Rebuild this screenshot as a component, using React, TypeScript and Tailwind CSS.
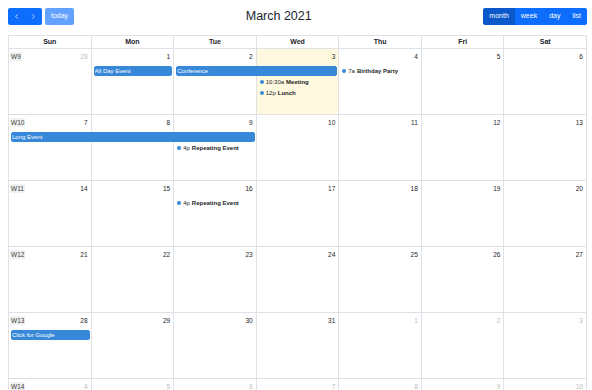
import React from 'react';
import { ChevronLeft, ChevronRight } from 'lucide-react';

type Bar = { col: number; span: number; row: number; title: string };
type Dot = { col: number; row: number; time: string; title: string };
type Week = { label: string; days: { n: number; other?: boolean; today?: boolean }[]; bars?: Bar[]; dots?: Dot[] };

const colStart = ['', 'col-start-1', 'col-start-2', 'col-start-3', 'col-start-4', 'col-start-5', 'col-start-6', 'col-start-7'];
const colSpan = ['', 'col-span-1', 'col-span-2', 'col-span-3'];
const rowStart = ['', 'row-start-1', 'row-start-2', 'row-start-3', 'row-start-4'];

const weeks: Week[] = [
  {
    label: 'W9',
    days: [{ n: 28, other: true }, { n: 1 }, { n: 2 }, { n: 3, today: true }, { n: 4 }, { n: 5 }, { n: 6 }],
    bars: [
      { col: 2, span: 1, row: 2, title: 'All Day Event' },
      { col: 3, span: 2, row: 2, title: 'Conference' },
    ],
    dots: [
      { col: 4, row: 3, time: '10:30a', title: 'Meeting' },
      { col: 4, row: 4, time: '12p', title: 'Lunch' },
      { col: 5, row: 2, time: '7a', title: 'Birthday Party' },
    ],
  },
  {
    label: 'W10',
    days: [7, 8, 9, 10, 11, 12, 13].map((n) => ({ n })),
    bars: [{ col: 1, span: 3, row: 2, title: 'Long Event' }],
    dots: [{ col: 3, row: 3, time: '4p', title: 'Repeating Event' }],
  },
  {
    label: 'W11',
    days: [14, 15, 16, 17, 18, 19, 20].map((n) => ({ n })),
    dots: [{ col: 3, row: 2, time: '4p', title: 'Repeating Event' }],
  },
  { label: 'W12', days: [21, 22, 23, 24, 25, 26, 27].map((n) => ({ n })) },
  {
    label: 'W13',
    days: [{ n: 28 }, { n: 29 }, { n: 30 }, { n: 31 }, { n: 1, other: true }, { n: 2, other: true }, { n: 3, other: true }],
    bars: [{ col: 1, span: 1, row: 2, title: 'Click for Google' }],
  },
  { label: 'W14', days: [4, 5, 6, 7, 8, 9, 10].map((n) => ({ n, other: true })) },
];

const dayNames = ['Sun', 'Mon', 'Tue', 'Wed', 'Thu', 'Fri', 'Sat'];

const WeekRow: React.FC<{ week: Week }> = ({ week }) => (
  <div className="grid grid-cols-7 grid-rows-[17px_11px_11px_11px_1fr] h-[66px]">
    {week.days.map((d, i) => (
      <div
        key={i}
        className={`${colStart[i + 1]} row-start-1 row-span-5 border-r border-b border-[#dee2e6] ${d.today ? 'bg-[#fffadf]' : ''}`}
      >
        <div className="flex justify-between items-start pt-[3px] pl-[1px] pr-[3px] leading-[9px] text-[6.5px]">
          {i === 0 ? (
            <span className="bg-[#d0d0d04d] text-[#3a3a3a] px-[1px]">{week.label}</span>
          ) : (
            <span />
          )}
          <span className={d.other ? 'text-[#bbbcbd]' : 'text-[#212529]'}>{d.n}</span>
        </div>
      </div>
    ))}
    {week.bars?.map((b, i) => (
      <div
        key={`b${i}`}
        className={`${colStart[b.col]} ${colSpan[b.span]} ${rowStart[b.row]} mx-[2px] h-[10px] rounded-[2px] bg-[#3788d8] border border-[#3788d8] text-white text-[6px] leading-[8px] overflow-hidden whitespace-nowrap`}
      >
        {b.title}
      </div>
    ))}
    {week.dots?.map((e, i) => (
      <div
        key={`d${i}`}
        className={`${colStart[e.col]} ${rowStart[e.row]} flex items-center mx-[1px] h-[10px] text-[6px] text-[#212529] overflow-hidden whitespace-nowrap`}
      >
        <span className="mx-[2px] w-[4px] h-[4px] rounded-full bg-[#3788d8] shrink-0" />
        <span className="mr-[2px]">{e.time}</span>
        <span className="font-bold">{e.title}</span>
      </div>
    ))}
  </div>
);

export default function App() {
  return (
    <div className="w-[579px] ml-2 pt-2 bg-white text-[#212529]" style={{ fontFamily: '"Liberation Sans", Arial, sans-serif' }}>
      <div className="flex items-center justify-between h-[17px] mb-[10px]">
        <div className="flex items-center">
          <div className="flex">
            <button className="w-[17px] h-[17px] flex items-center justify-center bg-[#0d6efd] text-white rounded-l-[2px]">
              <ChevronLeft size={7} strokeWidth={2.5} />
            </button>
            <button className="w-[17px] h-[17px] flex items-center justify-center bg-[#0d6efd] text-white rounded-r-[2px]">
              <ChevronRight size={7} strokeWidth={2.5} />
            </button>
          </div>
          <button className="ml-[3px] h-[17px] px-[6px] bg-[#62a1fe] text-white text-[7px] rounded-[2px]">today</button>
        </div>
        <h2 className="text-[12.5px] leading-none">March 2021</h2>
        <div className="flex text-[7px] text-white">
          <button className="h-[17px] px-[6px] bg-[#0a58ca] rounded-l-[2px]">month</button>
          <button className="h-[17px] px-[6px] bg-[#0d6efd]">week</button>
          <button className="h-[17px] px-[6px] bg-[#0d6efd]">day</button>
          <button className="h-[17px] px-[6px] bg-[#0d6efd] rounded-r-[2px]">list</button>
        </div>
      </div>
      <div className="border-l border-t border-[#dee2e6]">
        <div className="grid grid-cols-7">
          {dayNames.map((n) => (
            <div key={n} className="h-[13px] border-r border-b border-[#dee2e6] text-center text-[7px] font-bold leading-[12px]">
              {n}
            </div>
          ))}
        </div>
        {weeks.map((w) => (
          <WeekRow key={w.label} week={w} />
        ))}
      </div>
    </div>
  );
}
